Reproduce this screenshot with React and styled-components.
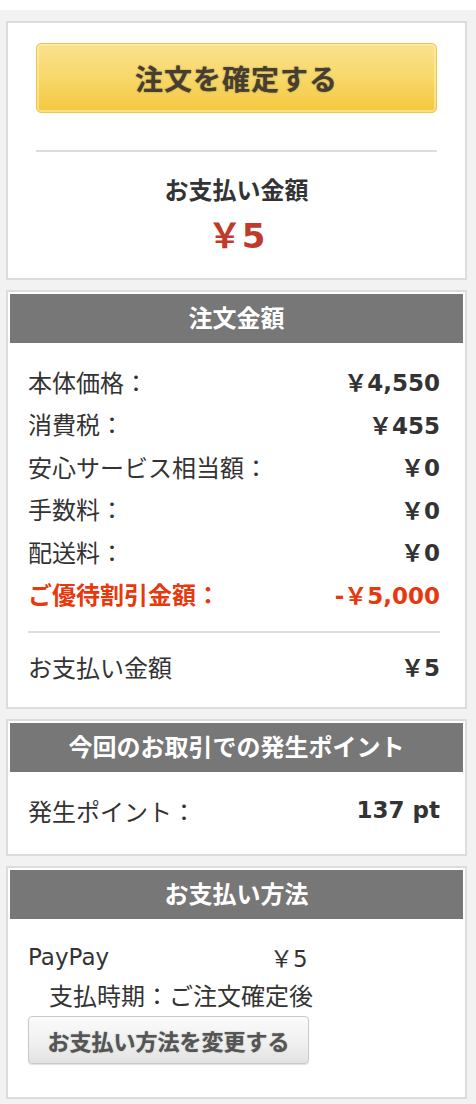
import React from "react";
import styled, { createGlobalStyle } from "styled-components";

const Global = createGlobalStyle`
  html, body { margin: 0; padding: 0; background: #ffffff; }
  body {
    font-family: "DejaVu Sans", "Noto Sans CJK JP", sans-serif;
    color: #333333;
  }
  * { box-sizing: border-box; }
`;

const Page = styled.div`
  margin-top: 10px;
  background: #f2f2f2;
  padding: 11px 9px 5px 6px;
  display: flex;
  flex-direction: column;
  gap: 10px;
`;

const Card = styled.section`
  background: #fff;
  border: 2px solid #dcdcdc;
  padding: 2px;
`;

const ConfirmBox = styled.div`
  padding: 18px 26px 20px;
  display: flex;
  flex-direction: column;
  align-items: stretch;
`;

const ConfirmButton = styled.button`
  height: 70px;
  border: 1px solid #efc54a;
  border-radius: 5px;
  background: linear-gradient(#fae18f, #f8d96d 45%, #f4c83f);
  box-shadow: inset 0 0 0 2px rgba(255, 240, 180, 0.55);
  font-family: "Noto Sans CJK JP", sans-serif;
  font-weight: 700;
  font-size: 28px;
  letter-spacing: 1px;
  color: #463e30;
  text-shadow: 0 0 1.5px rgba(60, 50, 30, 0.6);
  cursor: pointer;
`;

const Rule = styled.hr`
  border: 0;
  height: 2px;
  background: #dddddd;
  margin: ${(p) => p.$mt || 0}px 0 0;
`;

const TotalLabel = styled.div`
  margin-top: 24px;
  text-align: center;
  font-family: "Noto Sans CJK JP", sans-serif;
  font-weight: 700;
  font-size: 24px;
  line-height: 26px;
  color: #333;
`;

const TotalValue = styled.div`
  margin-top: 14px;
  text-align: center;
  font-weight: 700;
  font-size: 34px;
  line-height: 40px;
  color: #bf3a2b;
`;

const Header = styled.h2`
  margin: 0;
  height: 49px;
  background: #777777;
  color: #fff;
  text-align: center;
  font-family: "Noto Sans CJK JP", sans-serif;
  font-weight: 700;
  font-size: 24px;
  line-height: 46px;
`;

const Body = styled.div`
  padding: ${(p) => p.$pt}px 23px ${(p) => p.$pb}px 18px;
`;

const Row = styled.div`
  display: flex;
  justify-content: space-between;
  align-items: center;
  height: ${(p) => p.$h || 42.5}px;
  margin-top: ${(p) => p.$mt || 0}px;
  font-size: 23px;
  color: ${(p) => (p.$red ? "#e8380d" : "#333")};
  font-weight: ${(p) => (p.$red ? 700 : 400)};
`;

const Label = styled.span`
  font-family: "Noto Sans CJK JP", sans-serif;
  font-size: 24px;
`;

const Amount = styled.span`
  font-weight: 700;
`;

const PayRow = styled.div`
  display: grid;
  grid-template-columns: 242px auto;
  height: 38px;
  align-items: center;
  font-size: 23px;
`;

const Sub = styled.div`
  height: 38px;
  line-height: 38px;
  padding-left: 21px;
  font-family: "Noto Sans CJK JP", sans-serif;
  font-size: 24px;
`;

const ChangeButton = styled.button`
  margin-top: 2px;
  width: 281px;
  height: 48px;
  border: 1px solid #c9c9c9;
  border-radius: 4px;
  background: linear-gradient(#fbfbfb, #efefef 60%, #e2e2e2);
  box-shadow: 0 1px 1px rgba(0, 0, 0, 0.12);
  font-family: "Noto Sans CJK JP", sans-serif;
  font-weight: 700;
  font-size: 22px;
  color: #555;
  text-shadow: 0 0 1.2px rgba(60, 60, 60, 0.55);
  padding: 0;
  cursor: pointer;
`;

const rows = [
  ["本体価格：", "￥4,550"],
  ["消費税：", "￥455"],
  ["安心サービス相当額：", "￥0"],
  ["手数料：", "￥0"],
  ["配送料：", "￥0"],
];

export default function App() {
  return (
    <>
      <Global />
      <Page lang="ja">
        <Card>
          <ConfirmBox>
            <ConfirmButton>注文を確定する</ConfirmButton>
            <Rule $mt={37} />
            <TotalLabel>お支払い金額</TotalLabel>
            <TotalValue>￥5</TotalValue>
          </ConfirmBox>
        </Card>

        <Card>
          <Header>注文金額</Header>
          <Body $pt={17} $pb={18}>
            {rows.map(([l, v]) => (
              <Row key={l}>
                <Label>{l}</Label>
                <Amount>{v}</Amount>
              </Row>
            ))}
            <Row $red>
              <Label>ご優待割引金額：</Label>
              <span>-￥5,000</span>
            </Row>
            <Rule $mt={16} />
            <Row $h={42} $mt={12}>
              <Label>お支払い金額</Label>
              <Amount>￥5</Amount>
            </Row>
          </Body>
        </Card>

        <Card>
          <Header>今回のお取引での発生ポイント</Header>
          <Body $pt={17} $pb={21}>
            <Row $h={42}>
              <Label>発生ポイント：</Label>
              <Amount>137 pt</Amount>
            </Row>
          </Body>
        </Card>

        <Card>
          <Header>お支払い方法</Header>
          <Body $pt={19} $pb={31}>
            <PayRow>
              <span>PayPay</span>
              <span>￥5</span>
            </PayRow>
            <Sub>支払時期：ご注文確定後</Sub>
            <ChangeButton>お支払い方法を変更する</ChangeButton>
          </Body>
        </Card>
      </Page>
    </>
  );
}
